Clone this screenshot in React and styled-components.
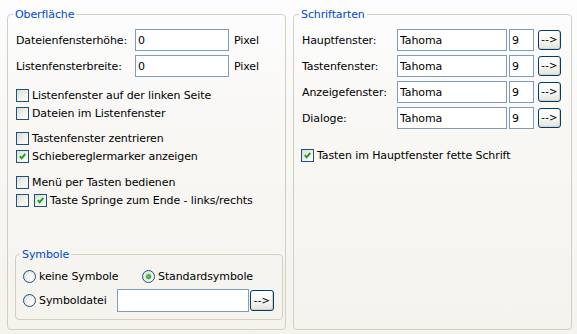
import React from 'react';
import styled, { createGlobalStyle } from 'styled-components';

const GlobalStyle = createGlobalStyle`
  html, body {
    margin: 0;
    padding: 0;
  }
  body {
    width: 577px;
    height: 334px;
    overflow: hidden;
    font-family: "DejaVu Sans", Verdana, sans-serif;
    font-size: 11px;
    letter-spacing: -0.1px;
    color: #000;
  }
`;

const Page = styled.div`
  width: 577px;
  height: 334px;
  box-sizing: border-box;
  padding: 8px 5px 4px 7px;
  display: flex;
  gap: 7px;
  background: linear-gradient(to bottom, #fdfdfe 0%, #f8f7f4 40%, #f4f3ee 100%);
`;

const Group = styled.fieldset`
  margin: 0;
  padding: 0;
  width: 279px;
  min-width: 0;
  box-sizing: border-box;
  border: 1px solid #d0d0bf;
  border-radius: 4px;
  display: flex;
  flex-direction: column;
`;

const SubGroup = styled(Group)`
  width: auto;
  margin: auto 0 0 -1px;
`;

const Legend = styled.legend`
  color: #0046d5;
  font-size: 11px;
  line-height: 13px;
  padding: 0 2px;
  margin-left: ${p => p.$indent}px;
`;

const Body = styled.div`
  flex: 1;
  display: flex;
  flex-direction: column;
  padding: ${p => p.$pad};
`;

const FieldRow = styled.div`
  display: flex;
  align-items: center;
  height: 22px;
  margin-bottom: 4px;
`;

const Label = styled.span`
  width: ${p => p.$w}px;
  flex: none;
`;

const TextInput = styled.input`
  box-sizing: border-box;
  width: ${p => p.$w}px;
  height: ${p => p.$h || 22}px;
  margin: 0 ${p => p.$gap || 0}px 0 0;
  padding: 0 2px;
  border: 1px solid #7f9db9;
  background: #fff;
  font: inherit;
  letter-spacing: inherit;
  color: #000;
  outline: none;
  flex: none;
`;

const Unit = styled.span`
  margin-left: 5px;
`;

const ArrowButton = styled.button`
  box-sizing: border-box;
  width: ${p => p.$w || 23}px;
  height: ${p => p.$h || 20}px;
  padding: 0 0 1px;
  margin: 0;
  border: 1px solid #003c74;
  border-radius: 3px;
  background: linear-gradient(to bottom, #ffffff 0%, #f4f4f0 60%, #e3e2da 100%);
  box-shadow: inset -1px -1px 0 #d6d0c5;
  font-family: inherit;
  font-size: 10px;
  letter-spacing: 0.3px;
  color: #000;
  flex: none;
`;

const CheckList = styled.div`
  display: flex;
  flex-direction: column;
  margin-top: ${p => p.$top || 0}px;
`;

const CheckRow = styled.label`
  display: flex;
  align-items: center;
  height: 18px;
  gap: 3px;
  margin-left: ${p => p.$shift || 0}px;
`;

const Box = styled.span`
  width: 13px;
  height: 13px;
  box-sizing: border-box;
  border: 1px solid #1c5180;
  background: linear-gradient(135deg, #dcdcd7 0%, #efeee9 50%, #ffffff 100%);
  display: inline-flex;
  align-items: center;
  justify-content: center;
  flex: none;
  margin-right: ${p => p.$gap || 0}px;
`;

const Radio = styled.span`
  width: 13px;
  height: 13px;
  box-sizing: border-box;
  border: 1px solid #1c5180;
  border-radius: 50%;
  background: radial-gradient(circle at 65% 65%, #ffffff 0%, #f2f1ec 45%, #d6d5cf 100%);
  display: inline-flex;
  align-items: center;
  justify-content: center;
  flex: none;
`;

const Dot = styled.span`
  width: 5px;
  height: 5px;
  border-radius: 50%;
  background: radial-gradient(circle at 40% 40%, #5fd35f 0%, #21a121 70%);
  box-shadow: 0 0 0 1px #c9eac9;
`;

const RadioItem = styled.label`
  display: flex;
  align-items: center;
  gap: 3px;
  width: ${p => (p.$w ? `${p.$w}px` : 'auto')};
  flex: none;
`;

const RadioRow = styled.div`
  display: flex;
  align-items: center;
  height: ${p => p.$h}px;
  margin-top: ${p => p.$top}px;
`;

const Spacer = styled.div`
  height: ${p => p.$h}px;
`;

const Tick = () => (
  <svg width="7" height="7" viewBox="0 0 7 7">
    <polyline points="0.8,3.2 2.6,5.2 6.3,1" fill="none" stroke="#21a121" strokeWidth="1.9" />
  </svg>
);

const Check = ({ checked, children, gap }) => (
  <>
    <Box $gap={gap}>{checked && <Tick />}</Box>
    {children}
  </>
);

const fonts = ['Hauptfenster:', 'Tastenfenster:', 'Anzeigefenster:', 'Dialoge:'];

export default function App() {
  return (
    <>
      <GlobalStyle />
      <Page>
        <Group>
          <Legend $indent={5}>Oberfläche</Legend>
          <Body $pad="8px 2px 9px 8px">
            <FieldRow>
              <Label $w={119}>Dateienfensterhöhe:</Label>
              <TextInput $w={94} defaultValue="0" />
              <Unit>Pixel</Unit>
            </FieldRow>
            <FieldRow>
              <Label $w={119}>Listenfensterbreite:</Label>
              <TextInput $w={94} defaultValue="0" />
              <Unit>Pixel</Unit>
            </FieldRow>
            <CheckList $top={5}>
              <CheckRow><Check>Listenfenster auf der linken Seite</Check></CheckRow>
              <CheckRow><Check>Dateien im Listenfenster</Check></CheckRow>
            </CheckList>
            <CheckList $top={7}>
              <CheckRow><Check>Tastenfenster zentrieren</Check></CheckRow>
              <CheckRow><Check checked>Schiebereglermarker anzeigen</Check></CheckRow>
            </CheckList>
            <CheckList $top={8}>
              <CheckRow><Check>Menü per Tasten bedienen</Check></CheckRow>
              <CheckRow>
                <Box $gap={2} />
                <Check checked>Taste Springe zum Ende - links/rechts</Check>
              </CheckRow>
            </CheckList>
            <SubGroup>
              <Legend $indent={4}>Symbole</Legend>
              <Body $pad="0 8px 7px 7px">
                <RadioRow $h={16} $top={7}>
                  <RadioItem $w={119}><Radio />keine Symbole</RadioItem>
                  <RadioItem><Radio><Dot /></Radio>Standardsymbole</RadioItem>
                </RadioRow>
                <RadioRow $h={23} $top={5}>
                  <RadioItem $w={94}><Radio />Symboldatei</RadioItem>
                  <TextInput $w={132} $h={23} $gap={1} />
                  <ArrowButton $w={24} $h={21}>--&gt;</ArrowButton>
                </RadioRow>
              </Body>
            </SubGroup>
          </Body>
        </Group>
        <Group>
          <Legend $indent={5}>Schriftarten</Legend>
          <Body $pad="8px 8px 9px 8px">
            {fonts.map(f => (
              <FieldRow key={f}>
                <Label $w={95}>{f}</Label>
                <TextInput $w={110} $gap={2} defaultValue="Tahoma" />
                <TextInput $w={25} $gap={4} defaultValue="9" />
                <ArrowButton>--&gt;</ArrowButton>
              </FieldRow>
            ))}
            <Spacer $h={13} />
            <CheckRow $shift={-1}><Check checked>Tasten im Hauptfenster fette Schrift</Check></CheckRow>
          </Body>
        </Group>
      </Page>
    </>
  );
}
